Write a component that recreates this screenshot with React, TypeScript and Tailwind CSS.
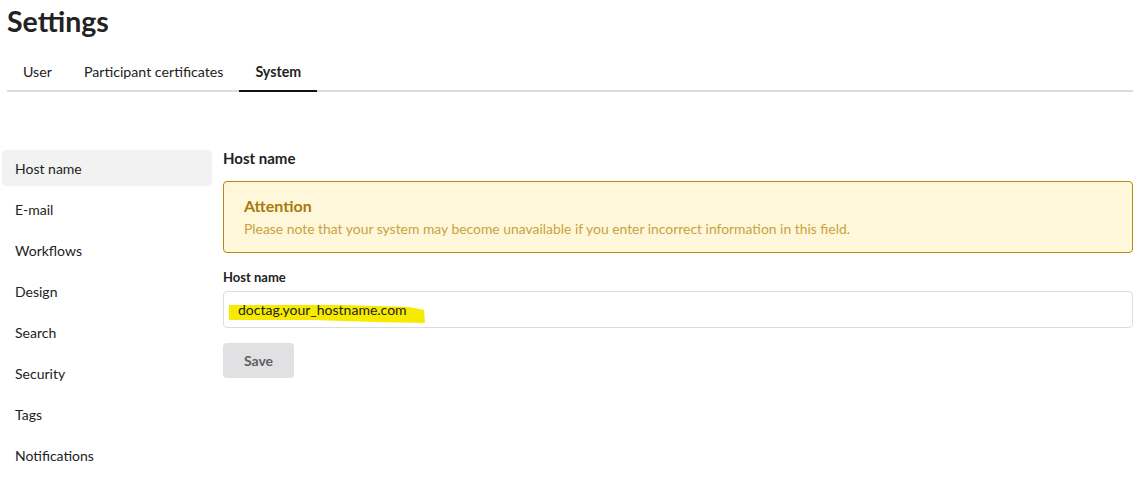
import React from "react";

const sideItems = ["Host name", "E-mail", "Workflows", "Design", "Search", "Security", "Tags", "Notifications"];

export default function App() {
  return (
    <div className="w-full h-[484px] bg-white text-[#222222] overflow-hidden" style={{ fontFamily: "Lato, 'Noto Sans', sans-serif" }}>
      <h1 className="pl-[7px] pt-[4px] text-[28.5px] font-bold leading-[1.2]">Settings</h1>
      <div className="mt-[15px] ml-[7px] w-[1126px] flex border-b-2 border-[#dddddd]">
        <div className="px-4 pt-[10px] pb-[9px] text-[14.2px] leading-[18px]">User</div>
        <div className="px-4 pt-[10px] pb-[9px] text-[14.2px] leading-[18px]">Participant certificates</div>
        <div className="px-4 pt-[10px] pb-[7px] -mb-[2px] border-b-2 border-[#111111] text-[14.2px] leading-[18px] font-bold">System</div>
      </div>
      <div className="flex pl-[2px] pt-[58px] gap-[11px]">
        <div className="w-[210px] flex flex-col gap-[5px]">
          {sideItems.map((s, i) => (
            <div
              key={s}
              className={
                "h-[36px] flex items-center pl-[13px] rounded-[4px] text-[14px] " +
                (i === 0 ? "bg-[#f2f2f2]" : "")
              }
            >
              {s}
            </div>
          ))}
        </div>
        <div className="w-[910px] flex flex-col">
          <div className="text-[15px] leading-[18px] font-bold -mt-[1px]">Host name</div>
          <div className="mt-[14px] h-[72px] border border-[#b8890f] bg-[#fff7da] rounded-[4px] px-5 pt-[14px]">
            <div className="text-[16px] leading-[20px] font-bold text-[#a87a0c]">Attention</div>
            <div className="mt-[4px] text-[13.9px] leading-[18px] text-[#c9a23f]">
              Please note that your system may become unavailable if you enter incorrect information in this field.
            </div>
          </div>
          <div className="mt-[16px] text-[13px] leading-[16px] font-bold">Host name</div>
          <div className="relative mt-[6px] h-[37px] border border-[#dcdcdc] rounded-[4px] flex items-center pl-[14px]">
            <svg className="absolute left-0 top-0" width="220" height="37" viewBox="0 0 220 37">
              <path d="M5 13 L120 13 L185 15 L200 18 L201 31 L150 30 L90 28 L5 28 Z" fill="#f6ea00" />
            </svg>
            <span className="relative text-[14px] text-[#222222]">doctag.your_hostname.com</span>
          </div>
          <button className="mt-[15px] w-[71px] h-[35px] rounded-[4px] bg-[#e1e1e3] text-[14px] font-bold text-[#5f5f5f]">
            Save
          </button>
        </div>
      </div>
    </div>
  );
}
